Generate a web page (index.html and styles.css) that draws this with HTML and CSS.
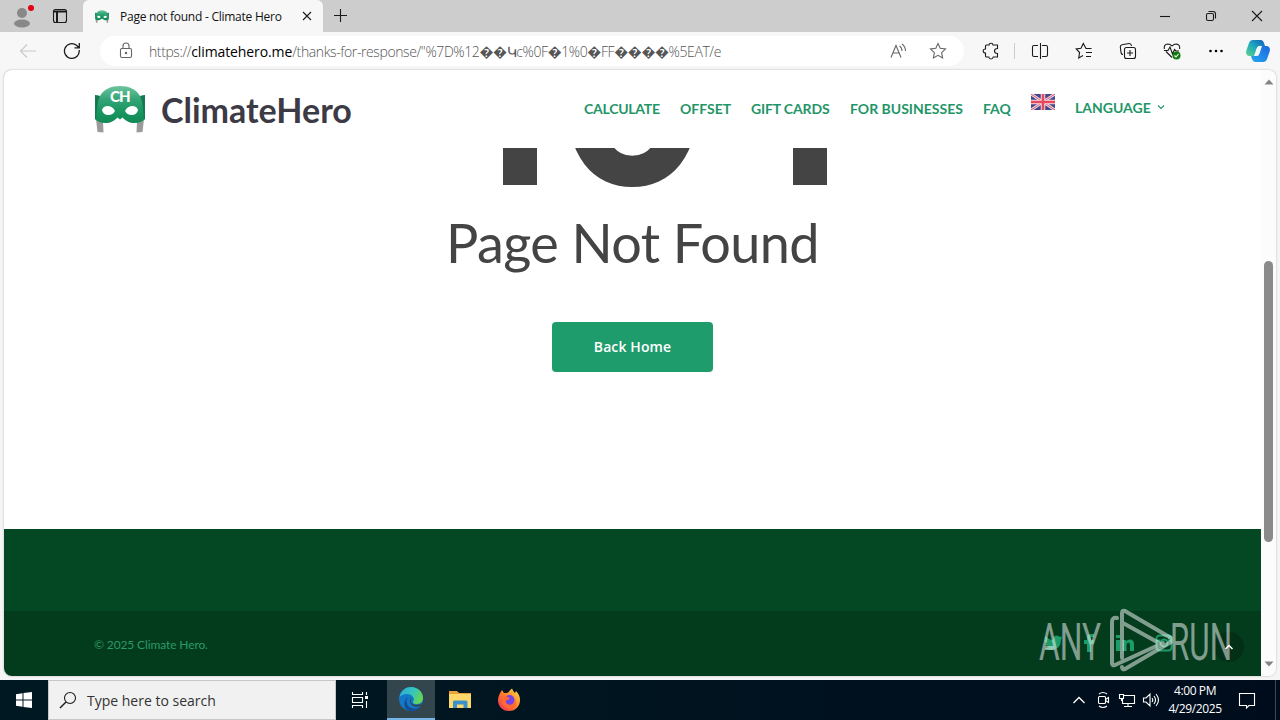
FILE: index.html
```
<!DOCTYPE html>
<html lang="en">

<head>
    <meta charset="UTF-8">
    <meta name="viewport" content="width=device-width, initial-scale=1.0">
    <title>Page not found - Climate Hero</title>
    <link rel="stylesheet" href="styles.css">
</head>

<body>
    <svg class="defs" width="0" height="0">
        <defs>
            <linearGradient id="mask-green" x1="0" y1="0" x2="0" y2="1">
                <stop offset="0" stop-color="#6cc59d" />
                <stop offset=".35" stop-color="#35a578" />
                <stop offset=".65" stop-color="#1b9763" />
                <stop offset="1" stop-color="#118a55" />
            </linearGradient>
            <linearGradient id="copilot-a" x1="0" y1="1" x2="1" y2="0">
                <stop offset="0" stop-color="#62d384" />
                <stop offset=".5" stop-color="#1ca8c0" />
                <stop offset="1" stop-color="#1459b8" />
            </linearGradient>
            <linearGradient id="copilot-b" x1="0" y1="1" x2="1" y2="0">
                <stop offset="0" stop-color="#27a7ee" />
                <stop offset="1" stop-color="#1b67df" />
            </linearGradient>
            <linearGradient id="edge-top" x1="0" y1="0" x2="1" y2=".4">
                <stop offset="0" stop-color="#2aa8df" />
                <stop offset=".6" stop-color="#36c6ba" />
                <stop offset="1" stop-color="#61d45c" />
            </linearGradient>
            <linearGradient id="fox" x1="1" y1="0" x2="0" y2="1">
                <stop offset="0" stop-color="#ffe24a" />
                <stop offset=".5" stop-color="#ff7c2b" />
                <stop offset="1" stop-color="#f0265e" />
            </linearGradient>
            <symbol id="mask" viewBox="0 0 52 48">
                <path d="M2 34 L3.500 47 L9.500 47.500 L9 36 Z M50 34 L48.500 47 L42.500 47.500 L43 36 Z" fill="#9b9b9b" />
                <path d="M1 10 L6 11 C10 4 17 1 26 1 S42 4 46 11 L51 10 V34 Q47 38 41 38 C35 38 32 36 28.500 32.500 L26 34.500 L23.500 32.500 C20 36 17 38 11 38 Q5 38 1 34 Z" fill="url(#mask-green)" />
                <path d="M1 10 L6 11 C3.500 16 3 24 2 34.500 L1 34 Z M51 10 L46 11 C48.500 16 49 24 50 34.500 L51 34 Z" fill="#137a50" />
                <path d="M8 25 Q9 21 14 21 Q19 21.500 21 26 Q19 30 14.500 30 Q9 30 8 25 Z M44 25 Q43 21 38 21 Q33 21.500 31 26 Q33 30 37.500 30 Q43 30 44 25 Z" fill="#fff" />
            </symbol>
        </defs>
    </svg>

    <div class="tab-strip">
        <div class="strip-left">
            <div class="profile">
                <svg width="20" height="24" viewBox="0 0 20 24">
                    <circle cx="10" cy="8" r="5" fill="#888" />
                    <ellipse cx="10" cy="18.500" rx="8" ry="4" fill="#888" />
                </svg>
                <span class="profile-dot"></span>
            </div>
            <svg class="ic tab-actions" width="16" height="16" viewBox="0 0 16 16">
                <rect x="1.500" y="1.500" width="13" height="13" rx="2" />
                <path d="M1.500 3.500 H14.500 M5 4 V14" stroke-width="2" />
            </svg>
        </div>
        <div class="tab">
            <svg width="14" height="13"><use href="#mask" /></svg>
            <span class="tab-title">Page not found - Climate Hero</span>
            <svg class="ic" width="10" height="10" viewBox="0 0 10 10"><path d="M1 1 L9 9 M9 1 L1 9" /></svg>
        </div>
        <svg class="ic new-tab" width="14" height="14" viewBox="0 0 14 14"><path d="M6.500 0 V13 M0 6.500 H13" /></svg>
        <div class="window-buttons">
            <svg class="ic" width="12" height="12" viewBox="0 0 12 12"><path d="M1 6.500 H11" /></svg>
            <svg class="ic" width="12" height="12" viewBox="0 0 12 12">
                <rect x="1.500" y="3.500" width="7" height="7" rx="1.500" />
                <path d="M3.500 1.500 H8 Q10.500 1.500 10.500 4 V8.500" />
            </svg>
            <svg class="ic" width="12" height="12" viewBox="0 0 12 12"><path d="M1 1 L11 11 M11 1 L1 11" /></svg>
        </div>
    </div>

    <div class="toolbar">
        <svg class="ic back" width="18" height="16" viewBox="0 0 18 16"><path d="M17 8 H1.500 M8 1.500 L1.500 8 L8 14.500" /></svg>
        <svg class="ic reload" width="18" height="18" viewBox="0 0 18 18">
            <path d="M16.200 8 A7.400 7.400 0 1 1 13.500 3.200 L16 5.500 M16.300 1 V5.800 H11.500" stroke-width="1.300" />
        </svg>
        <div class="address">
            <svg class="ic lock" width="14" height="18" viewBox="0 0 14 18">
                <rect x="1.500" y="6.500" width="11" height="9" rx="1.500" />
                <path d="M4 6.500 V4 A3 3 0 0 1 10 4 V6.500" />
                <circle cx="7" cy="11" r=".7" />
            </svg>
            <span class="url">https://<b>climatehero.me</b>/thanks-for-response/"%7D%12��Կc%0F�1%0�FF����%5EAT/e</span>
            <svg class="ic read-aloud" width="18" height="16" viewBox="0 0 18 16">
                <path d="M1 14.500 L6 2.500 L11 14.500 M3 10 H9.200 M9.500 3 Q12 4.500 12 8 M12 1 Q15.500 3.500 15.500 8" />
            </svg>
            <svg class="ic star" width="18" height="18" viewBox="0 0 18 18">
                <path d="M9 1.500 L11.200 6.300 L16.500 7 L12.600 10.600 L13.600 16 L9 13.300 L4.400 16 L5.400 10.600 L1.500 7 L6.800 6.300 Z" />
            </svg>
        </div>
        <div class="toolbar-icons">
            <svg class="ic" width="18" height="18" viewBox="0 0 18 18">
                <path d="M4.500 3 H7 Q7 1.200 9 1.200 T11 3 H15.500 V6.500 Q12.500 6.500 12.500 9 T15.500 11.500 V15 H11.200 Q11 17 9 17 T6.800 15 H4.500 Q3.500 15 3.500 14 V11 Q1.200 11 1.200 9 T3.500 7 V4 Q3.500 3 4.500 3 Z" />
            </svg>
            <span class="divider"></span>
            <svg class="ic" width="18" height="18" viewBox="0 0 18 18">
                <path d="M7 3.500 H3 Q1.500 3.500 1.500 5 V13 Q1.500 14.500 3 14.500 H7 M11 3.500 H15 Q16.500 3.500 16.500 5 V13 Q16.500 14.500 15 14.500 H11 M9.500 1 V17" />
            </svg>
            <svg class="ic" width="18" height="18" viewBox="0 0 18 18">
                <path d="M16.500 6.500 H11 L8.300 1.500 L6 6.300 L1.200 7 L4.600 10.500 L3.700 16 L8 13.600 M11 10.500 H17 M11 14.500 H16" />
            </svg>
            <svg class="ic" width="18" height="18" viewBox="0 0 18 18">
                <path d="M4 12.500 Q2.500 12.500 2.100 11 L1.300 5 Q1.200 3.300 3 2.800 L10 1.500 Q12 1.300 12.600 4" />
                <rect x="5.500" y="5.500" width="11" height="11" rx="2" />
                <path d="M11 8 V14 M8 11 H14" />
            </svg>
            <svg class="ic" width="18" height="18" viewBox="0 0 18 18">
                <path d="M9 15.500 L3 9.500 M1.300 7 Q.7 2.200 4.700 2 Q7.300 2 9 4 Q10.700 2 13.300 2 Q17.300 2.500 16.600 7 M1 8.500 H5 L7 5 L9.500 12 L11.500 7.500 L13 9 H16" />
                <circle cx="13.500" cy="13.500" r="4" fill="#107c10" stroke="none" />
                <path d="M11.500 13.500 L13 15 L15.500 12" stroke="#fff" />
            </svg>
            <svg width="18" height="18" viewBox="0 0 18 18">
                <circle cx="3.500" cy="9" r="1.300" /><circle cx="9" cy="9" r="1.300" /><circle cx="14.500" cy="9" r="1.300" />
            </svg>
            <svg class="copilot" width="24" height="22" viewBox="0 0 24 22">
                <path d="M7 0 H15 Q17 0 18 3 L19 6 H14 Q11 6 10 10 L8 16 H3 Q-1 15 .5 10 L3 3 Q4 0 7 0 Z" fill="url(#copilot-a)" />
                <path d="M17 22 H9 Q7 22 6 19 L5 16 H10 Q13 16 14 12 L16 6 H21 Q25 7 23.500 12 L21 19 Q20 22 17 22 Z" fill="url(#copilot-b)" />
                <path d="M12 6.500 H15 L12.500 15.500 H9.500 Z" fill="#f4f8fb" />
            </svg>
        </div>
    </div>

    <div class="viewport">
        <div class="page">
            <header class="site-header">
                <a class="logo">
                    <span class="logo-mask">
                        <svg width="52" height="48"><use href="#mask" /></svg>
                        <span class="logo-ch">CH</span>
                    </span>
                    <span class="logo-name">ClimateHero</span>
                </a>
                <nav class="menu">
                    <a class="calculate">Calculate</a>
                    <a class="offset">Offset</a>
                    <a class="gift">Gift Cards</a>
                    <a class="business">For Businesses</a>
                    <a class="faq">FAQ</a>
                    <svg class="flag" width="24" height="16" viewBox="0 0 24 16">
                        <rect width="24" height="16" fill="#45458a" />
                        <path d="M0 0 L24 16 M24 0 L0 16" stroke="#e6dcea" stroke-width="2.800" />
                        <path d="M0 0 L24 16 M24 0 L0 16" stroke="#e05566" stroke-width="1" />
                        <path d="M12 0 V16 M0 8 H24" stroke="#f6dce4" stroke-width="4.500" />
                        <path d="M12 0 V16 M0 8 H24" stroke="#e8485c" stroke-width="2.600" />
                    </svg>
                    <a class="language">Language</a>
                    <svg class="chevron" width="8" height="6" viewBox="0 0 8 6"><path d="M1 1.500 L4 4.500 L7 1.500" /></svg>
                </nav>
            </header>
            <main class="not-found">
                <h1>4<span>0</span>4</h1>
                <h2>Page Not Found</h2>
                <a class="button">Back Home</a>
            </main>
            <footer>
                <div class="footer-widgets"></div>
                <div class="footer-bottom">
                    <span class="copyright">© 2025 Climate Hero.</span>
                    <div class="social">
                        <svg width="20" height="18" viewBox="0 0 20 18">
                            <path d="M1 14 Q4 14.500 6 13 Q3 12 2.500 10 H4 Q1.500 8 1.500 5.500 L3 6 Q1.500 4 2.500 2 Q6 6 10 6 Q10 1.500 14 1.500 Q15.500 1.500 17 3 L19 2 L18 4 L19.500 3.500 L18 5.500 Q18 16 8 16 Q4 16 1 14 Z" />
                        </svg>
                        <svg width="12" height="20" viewBox="0 0 12 20"><path d="M4 19 V11 H1 V7 H4 V4 Q4 1 8 1 H11 V4 H9 Q8 4 8 5 V7 H11 L10.500 11 H8 V19 Z" /></svg>
                        <svg width="20" height="18" viewBox="0 0 20 18">
                            <path d="M1 6 H5 V17 H1 Z M1 1 H5 V4 H1 Z M7.500 6 H11 V7.500 Q12.500 5.500 15 5.500 Q19 5.500 19 10 V17 H15 V11 Q15 8.500 13.300 8.500 T11.500 11 V17 H7.500 Z" />
                        </svg>
                        <svg width="18" height="18" viewBox="0 0 18 18" class="insta">
                            <rect x="1.500" y="1.500" width="15" height="15" rx="3" />
                            <circle cx="9" cy="9" r="3.500" />
                            <path d="M2 6.500 H5.500 M12.500 6.500 H16 M13 3.500 H15" />
                        </svg>
                    </div>
                </div>
            </footer>
            <span class="to-top">
                <svg class="ic" width="10" height="8" viewBox="0 0 10 8"><path d="M1.500 6 L5 2.500 L8.500 6" /></svg>
            </span>
            <svg class="watermark" width="196" height="66" viewBox="0 0 196 66">
                <text x="0" y="53" textLength="62" lengthAdjust="spacingAndGlyphs">ANY</text>
                <text x="131" y="53" textLength="62" lengthAdjust="spacingAndGlyphs">RUN</text>
                <path d="M78 11 Q73 10 73 15 V56 Q73 59 76 58 L124 36 M83 51 V6 Q83 3 86 4 L132 31 Q134 33 132 35 L86 62 Q83 63 83 60 M84 16 L120 36" />
            </svg>
        </div>
        <div class="scrollbar">
            <svg width="10" height="6" viewBox="0 0 10 6"><path d="M.5 5.500 L5 .5 L9.500 5.500 Z" /></svg>
            <span class="thumb"></span>
            <svg width="10" height="6" viewBox="0 0 10 6"><path d="M.5 .5 L5 5.500 L9.500 .5 Z" /></svg>
        </div>
    </div>

    <div class="taskbar">
        <div class="task start">
            <svg width="18" height="18" viewBox="0 0 18 18" fill="#fff">
                <path d="M1 3.300 L7.500 2.300 V8.500 H1 Z M8.500 2.100 L17 1 V8.500 H8.500 Z M1 9.500 H7.500 V15.700 L1 14.700 Z M8.500 9.500 H17 V17 L8.500 15.900 Z" />
            </svg>
        </div>
        <div class="search">
            <svg class="ic" width="18" height="18" viewBox="0 0 18 18">
                <circle cx="11" cy="7" r="5.500" /><path d="M7 11 L1 17" stroke-width="1.400" />
            </svg>
            <span>Type here to search</span>
        </div>
        <div class="task task-view">
            <svg class="ic light" width="18" height="18" viewBox="0 0 18 18">
                <path d="M1.500 1 V3.500 H11.500 V1 M1.500 17 V14.500 H11.500 V17 M1.500 6.500 H11.500 V11.500 H1.500 Z M15.500 1 V4 M15.500 10 V17" />
                <path d="M14 6.500 H17" stroke-width="3" />
            </svg>
        </div>
        <div class="task active">
            <svg width="26" height="26" viewBox="0 0 26 26">
                <circle cx="13" cy="13" r="12" fill="#1378c8" />
                <path d="M1.500 11 C3 4 8 1 13 1 C20 1 25 6 25 12 C25 16 22 18 18.500 18 C15 18 14.500 16.500 15.500 15 C17 12 14 8 9 8 C5 8 2.500 10 1.500 11 Z" fill="url(#edge-top)" />
                <path d="M10 11 C6 17 11 23.500 18 22.500 L22 21 C19 25 15 25.500 11 24.800 C5 23 5 14 10 11 Z" fill="#154f91" />
                <path d="M14 12 C11.500 15 13 19 18 19 Q21 19 23.500 17.500 L23 20 C18 22 12 20 12 15 Q12 12.500 14 12 Z" fill="#33444c" />
            </svg>
        </div>
        <div class="task">
            <svg width="22" height="20" viewBox="0 0 22 20">
                <path d="M0 1 H8 L10 3 H22 V18 H0 Z" fill="#e8a33a" />
                <path d="M0 4 H22 V18 H0 Z" fill="#ffd86b" />
                <path d="M4 18 V12 Q4 10.500 5.500 10.500 H17 Q18.500 10.500 18.500 12 V18 H14.500 V14.500 H8 V18 Z" fill="#3c91c8" />
            </svg>
        </div>
        <div class="task">
            <svg width="24" height="24" viewBox="0 0 24 24">
                <path d="M12 23 C5 23 1 18 1 12 C1 8 3 5 5 2 L7 5 L10 5 C12 4 13 2 15 .5 C16 3 17 4 18 5 L19 3 C22 6 23 9 23 12 C23 18 19 23 12 23 Z" fill="url(#fox)" />
                <circle cx="12.500" cy="12" r="5" fill="#7542e5" />
                <path d="M4 9 Q7 7 11 9 L13 10.500 Q10 13 9 12 Q8 17 14 17 Q18 16 18 11 Q21 17 15 20 Q7 21 5 15 Z" fill="#ff6a32" />
            </svg>
        </div>
        <div class="tray">
            <svg class="ic light" width="14" height="8" viewBox="0 0 14 8"><path d="M1.500 7 L7 1.500 L12.500 7" stroke-width="1.300" /></svg>
            <svg class="ic light" width="14" height="18" viewBox="0 0 14 18">
                <rect x="2.500" y="5.500" width="7" height="7" rx="1" />
                <path d="M9.500 8.500 L12.500 6.500 V11.500 L9.500 9.500 M3 3 Q7 0 11 3 M3 15 Q7 18 11 15" />
            </svg>
            <svg class="ic light" width="18" height="16" viewBox="0 0 18 16">
                <path d="M6 3.500 H16.500 V11.500 H4.500 V7 M10 11.500 V14.500 M6 14.500 H14 M1.500 2 V6.500 H5.500 V2.500 H1.500 M3.500 6.500 V9" />
            </svg>
            <svg class="ic light" width="18" height="16" viewBox="0 0 18 16">
                <path d="M1.500 6 H4 L8 2 V14 L4 10 H1.500 Z M10 6 Q11.500 8 10 10 M12 4 Q15 8 12 12 M14 2 Q19 8 14 14" />
            </svg>
            <div class="clock"><span>4:00 PM</span><span>4/29/2025</span></div>
            <svg class="ic light" width="18" height="18" viewBox="0 0 18 18"><path d="M1.500 2.500 H16.500 V14.500 H11 L8.500 17 V14.500 H1.500 Z" /></svg>
            <span class="show-desktop"></span>
        </div>
    </div>
</body>

</html>
```
FILE: styles.css
```
* {
    box-sizing: border-box;
}

body {
    margin: 0;
    width: 1280px;
    height: 720px;
    overflow: hidden;
    display: flex;
    flex-direction: column;
    background: #f5f5f5;
    font-family: "Open Sans", "Noto Sans", sans-serif;
    color: #111;
}

svg {
    display: block;
    flex: none;
}

.defs {
    position: absolute;
}

.ic {
    fill: none;
    stroke: #1a1a1a;
    stroke-width: 1.1;
}

.light {
    stroke: #fff;
}

/* Browser tabs */
.tab-strip {
    display: flex;
    height: 32px;
    background: #cdcdcd;
}

.strip-left {
    display: flex;
    align-items: center;
    width: 83px;
    padding-left: 12px;
}

.profile {
    position: relative;
    padding-top: 2px;
}

.profile-dot {
    position: absolute;
    top: 2px;
    left: 16px;
    width: 6px;
    height: 6px;
    border-radius: 50%;
    background: #e3000f;
}

.tab-actions {
    margin-left: 20px;
}

.tab {
    display: flex;
    align-items: center;
    width: 240px;
    padding: 0 15px 0 12px;
    background: #f7f7f7;
    border-radius: 6px 6px 0 0;
}

.tab-title {
    margin-left: 11px;
    width: 182px;
    font-size: 12px;
    letter-spacing: -.25px;
    white-space: nowrap;
}

.tab .ic {
    flex-shrink: 0;
    margin-left: auto;
    margin-right: -4px;
}

.new-tab {
    margin: 9px 0 0 11px;
}

.window-buttons {
    display: flex;
    gap: 34px;
    margin: 10px 17px 0 auto;
}

/* Address bar */
.toolbar {
    display: flex;
    align-items: center;
    height: 38px;
    flex: none;
    background: #f7f7f7;
}

.back {
    margin-left: 19px;
    stroke: #c8c8c8;
}

.reload {
    margin-left: 26px;
}

.address {
    display: flex;
    align-items: center;
    width: 864px;
    height: 30px;
    margin-left: 19px;
    padding-left: 19px;
    border-radius: 15px;
    background: #fff;
}

.lock,
.read-aloud,
.star {
    stroke: #666;
}

.url {
    width: 741px;
    margin-left: 16px;
    font-size: 14px;
    font-weight: 300;
    letter-spacing: -.4px;
    color: #555;
    white-space: nowrap;
}

.url b {
    font-weight: 400;
    letter-spacing: -.1px;
    color: #000;
}

.star {
    margin-left: 21px;
}

.toolbar-icons {
    display: flex;
    align-items: center;
    gap: 26px;
    margin-left: 18px;
}

.divider {
    width: 1px;
    height: 16px;
    margin: 0 -10px 0 -12px;
    background: #ccc;
}

.copilot {
    margin-left: -5px;
}

/* Rendered page */
.viewport {
    display: flex;
    width: 1272px;
    height: 606px;
    flex: none;
    margin: 0 4px;
    border-radius: 8px;
    overflow: hidden;
    background: #fff;
    box-shadow: 0 0 2px #aaa;
}

.page {
    position: relative;
    width: 1257px;
    font-family: Lato, sans-serif;
}

.site-header {
    display: flex;
    justify-content: space-between;
    height: 78px;
    padding: 0 96px 0 90px;
}

.logo {
    display: flex;
    padding-top: 15px;
}

.logo-mask {
    position: relative;
}

.logo-ch {
    position: absolute;
    top: 3px;
    left: 16px;
    font-size: 15px;
    line-height: 17px;
    font-weight: 900;
    letter-spacing: -1px;
    color: #fff;
}

.logo-name {
    margin-left: 15px;
    font-size: 34px;
    line-height: 49px;
    font-weight: 700;
    color: #3b3a45;
}

.menu {
    display: flex;
    padding-top: 30px;
    font-size: 14px;
    line-height: 18px;
    font-weight: 700;
    text-transform: uppercase;
    white-space: nowrap;
    color: #1f9668;
}

.calculate {
    width: 96px;
    letter-spacing: -.25px;
}

.offset {
    width: 71px;
}

.gift {
    width: 99px;
    letter-spacing: -.15px;
}

.business {
    width: 133px;
}

.faq {
    width: 48px;
}

.flag {
    margin-top: -6px;
}

.language {
    width: 82px;
    margin: -1px 0 0 20px;
}

.chevron {
    margin-top: 4px;
    fill: none;
    stroke: #1f9668;
    stroke-width: 1.2;
}

.not-found {
    display: flex;
    flex-direction: column;
    align-items: center;
    height: 381px;
    overflow: hidden;
    color: #444;
}

/* top of the numerals runs under the header */
.not-found h1 {
    flex: none;
    margin: -185px 0 0;
    font-size: 250px;
    line-height: 250px;
    font-weight: 900;
    text-shadow: 2px 0 #444, 4px 0 #444;
}

.not-found h1 span {
    text-shadow: 0 -3px #444;
}

.not-found h2 {
    margin: 3px 0 52px;
    font-size: 54px;
    line-height: 54px;
    font-weight: 400;
    letter-spacing: -.6px;
}

.button {
    width: 161px;
    height: 50px;
    border-radius: 4px;
    background: #1f9c6c;
    color: #fff;
    font: 600 14px/50px "Open Sans", sans-serif;
    letter-spacing: .1px;
    text-align: center;
}

.footer-widgets {
    height: 82px;
    background: #044823;
}

.footer-bottom {
    display: flex;
    justify-content: space-between;
    height: 65px;
    padding: 0 88px 0 90px;
    background: #033b1d;
}

.copyright {
    font-size: 12px;
    line-height: 68px;
    letter-spacing: -.12px;
    color: #2b9a66;
}

.social {
    display: flex;
    align-items: center;
    gap: 20px;
    padding-bottom: 2px;
    fill: #1c9c68;
}

.insta {
    fill: none;
    stroke: #1c9c68;
    stroke-width: 1.8;
}

.to-top {
    position: absolute;
    right: 17px;
    bottom: 14px;
    display: grid;
    place-items: center;
    width: 30px;
    height: 30px;
    border-radius: 50%;
    background: #032f17;
}

.to-top svg {
    stroke: #fff;
    stroke-width: 1.5;
}

.watermark {
    position: absolute;
    right: 26px;
    bottom: 3px;
    opacity: .5;
    font: 400 52px Roboto, sans-serif;
    fill: #fff;
}

.watermark path {
    fill: none;
    stroke: #fff;
    stroke-width: 4;
    stroke-linecap: round;
    stroke-linejoin: round;
}

.scrollbar {
    display: flex;
    flex-direction: column;
    align-items: center;
    width: 15px;
    padding: 9px 0;
    background: #fcfcfc;
    fill: #858585;
}

.thumb {
    width: 9px;
    height: 281px;
    margin: 176px 0 auto;
    border-radius: 5px;
    background: #8a8a8a;
}

/* Windows taskbar */
.taskbar {
    display: flex;
    height: 40px;
    flex: none;
    margin-top: 4px;
    background: linear-gradient(90deg, #001821, #001520 45%, #000c1c);
}

.task {
    display: grid;
    place-items: center;
    width: 49px;
}

.start {
    width: 48px;
}

.task-view {
    width: 51px;
    padding-right: 3px;
}

.search {
    display: flex;
    align-items: center;
    width: 288px;
    padding-left: 10px;
    border: 1px solid #c6c6c6;
    background: #f1f1f1;
    font-size: 14px;
    color: #333;
}

.search span {
    margin-left: 10px;
}

.active {
    width: 48px;
    background: #33464e;
    border-bottom: 2px solid #76b5e8;
}

.tray {
    display: flex;
    align-items: center;
    gap: 8px;
    margin-left: auto;
}

.tray svg:nth-child(1) {
    margin-right: 2px;
}

.tray svg:nth-child(3) {
    margin-right: -2px;
}

.clock {
    display: flex;
    flex-direction: column;
    width: 54px;
    margin-right: 8px;
    font-size: 12px;
    line-height: 18px;
    letter-spacing: -.4px;
    text-align: center;
    color: #fff;
}

.show-desktop {
    width: 1px;
    height: 40px;
    margin: 0 4px 0 11px;
    background: #3d4855;
}
```
